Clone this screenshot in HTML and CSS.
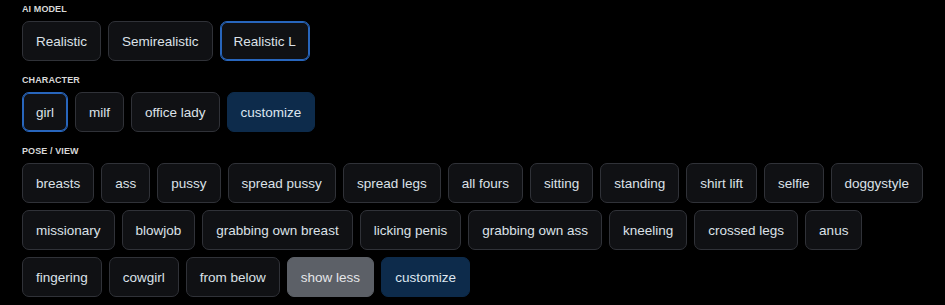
FILE: index.html
```html
<!DOCTYPE html>
<html lang="en">
<head>
<meta charset="utf-8">
<title>Options</title>
<link rel="stylesheet" href="styles.css">
</head>
<body>
<div class="panel">
  <section class="group">
    <div class="label">AI MODEL</div>
    <div class="chips">
      <button class="chip">Realistic</button>
      <button class="chip">Semirealistic</button>
      <button class="chip selected">Realistic L</button>
    </div>
  </section>
  <section class="group">
    <div class="label">CHARACTER</div>
    <div class="chips">
      <button class="chip selected">girl</button>
      <button class="chip">milf</button>
      <button class="chip">office lady</button>
      <button class="chip action">customize</button>
    </div>
  </section>
  <section class="group">
    <div class="label">POSE / VIEW</div>
    <div class="chips">
      <button class="chip">breasts</button>
      <button class="chip">ass</button>
      <button class="chip">pussy</button>
      <button class="chip">spread pussy</button>
      <button class="chip">spread legs</button>
      <button class="chip">all fours</button>
      <button class="chip">sitting</button>
      <button class="chip">standing</button>
      <button class="chip">shirt lift</button>
      <button class="chip">selfie</button>
      <button class="chip">doggystyle</button>
      <button class="chip">missionary</button>
      <button class="chip">blowjob</button>
      <button class="chip">grabbing own breast</button>
      <button class="chip">licking penis</button>
      <button class="chip">grabbing own ass</button>
      <button class="chip">kneeling</button>
      <button class="chip">crossed legs</button>
      <button class="chip">anus</button>
      <button class="chip">fingering</button>
      <button class="chip">cowgirl</button>
      <button class="chip">from below</button>
      <button class="chip muted">show less</button>
      <button class="chip action">customize</button>
    </div>
  </section>
</div>
</body>
</html>
```

FILE: styles.css
```css
html, body {
  margin: 0;
  padding: 0;
  background: #000;
}

body {
  font-family: "Liberation Sans", Arial, sans-serif;
  color: #d9dee5;
}

.panel {
  padding: 3px 18px 0 22px;
  display: flex;
  flex-direction: column;
  gap: 13px;
}

.label {
  font-size: 9px;
  font-weight: bold;
  line-height: 12px;
  color: #d8d8d8;
  margin-bottom: 6px;
  letter-spacing: 0.1px;
}

.chips {
  display: flex;
  flex-wrap: wrap;
  gap: 7px;
}

.chip {
  box-sizing: border-box;
  height: 40px;
  margin: 0;
  padding: 0 13px;
  font-family: "Liberation Sans", Arial, sans-serif;
  font-size: 13.5px;
  color: #dce1e8;
  background: #101114;
  border: 1px solid #303238;
  border-radius: 7px;
  white-space: nowrap;
  cursor: pointer;
}

.chip.selected {
  border-color: #2866bd;
  box-shadow: inset 0 0 0 1px #2866bd;
}

.chip.action {
  background: #0d2b4b;
  border-color: #0d2b4b;
  color: #dde6f0;
}

.chip.muted {
  background: #5c6067;
  border-color: #5c6067;
  color: #e4e6e9;
}
```
